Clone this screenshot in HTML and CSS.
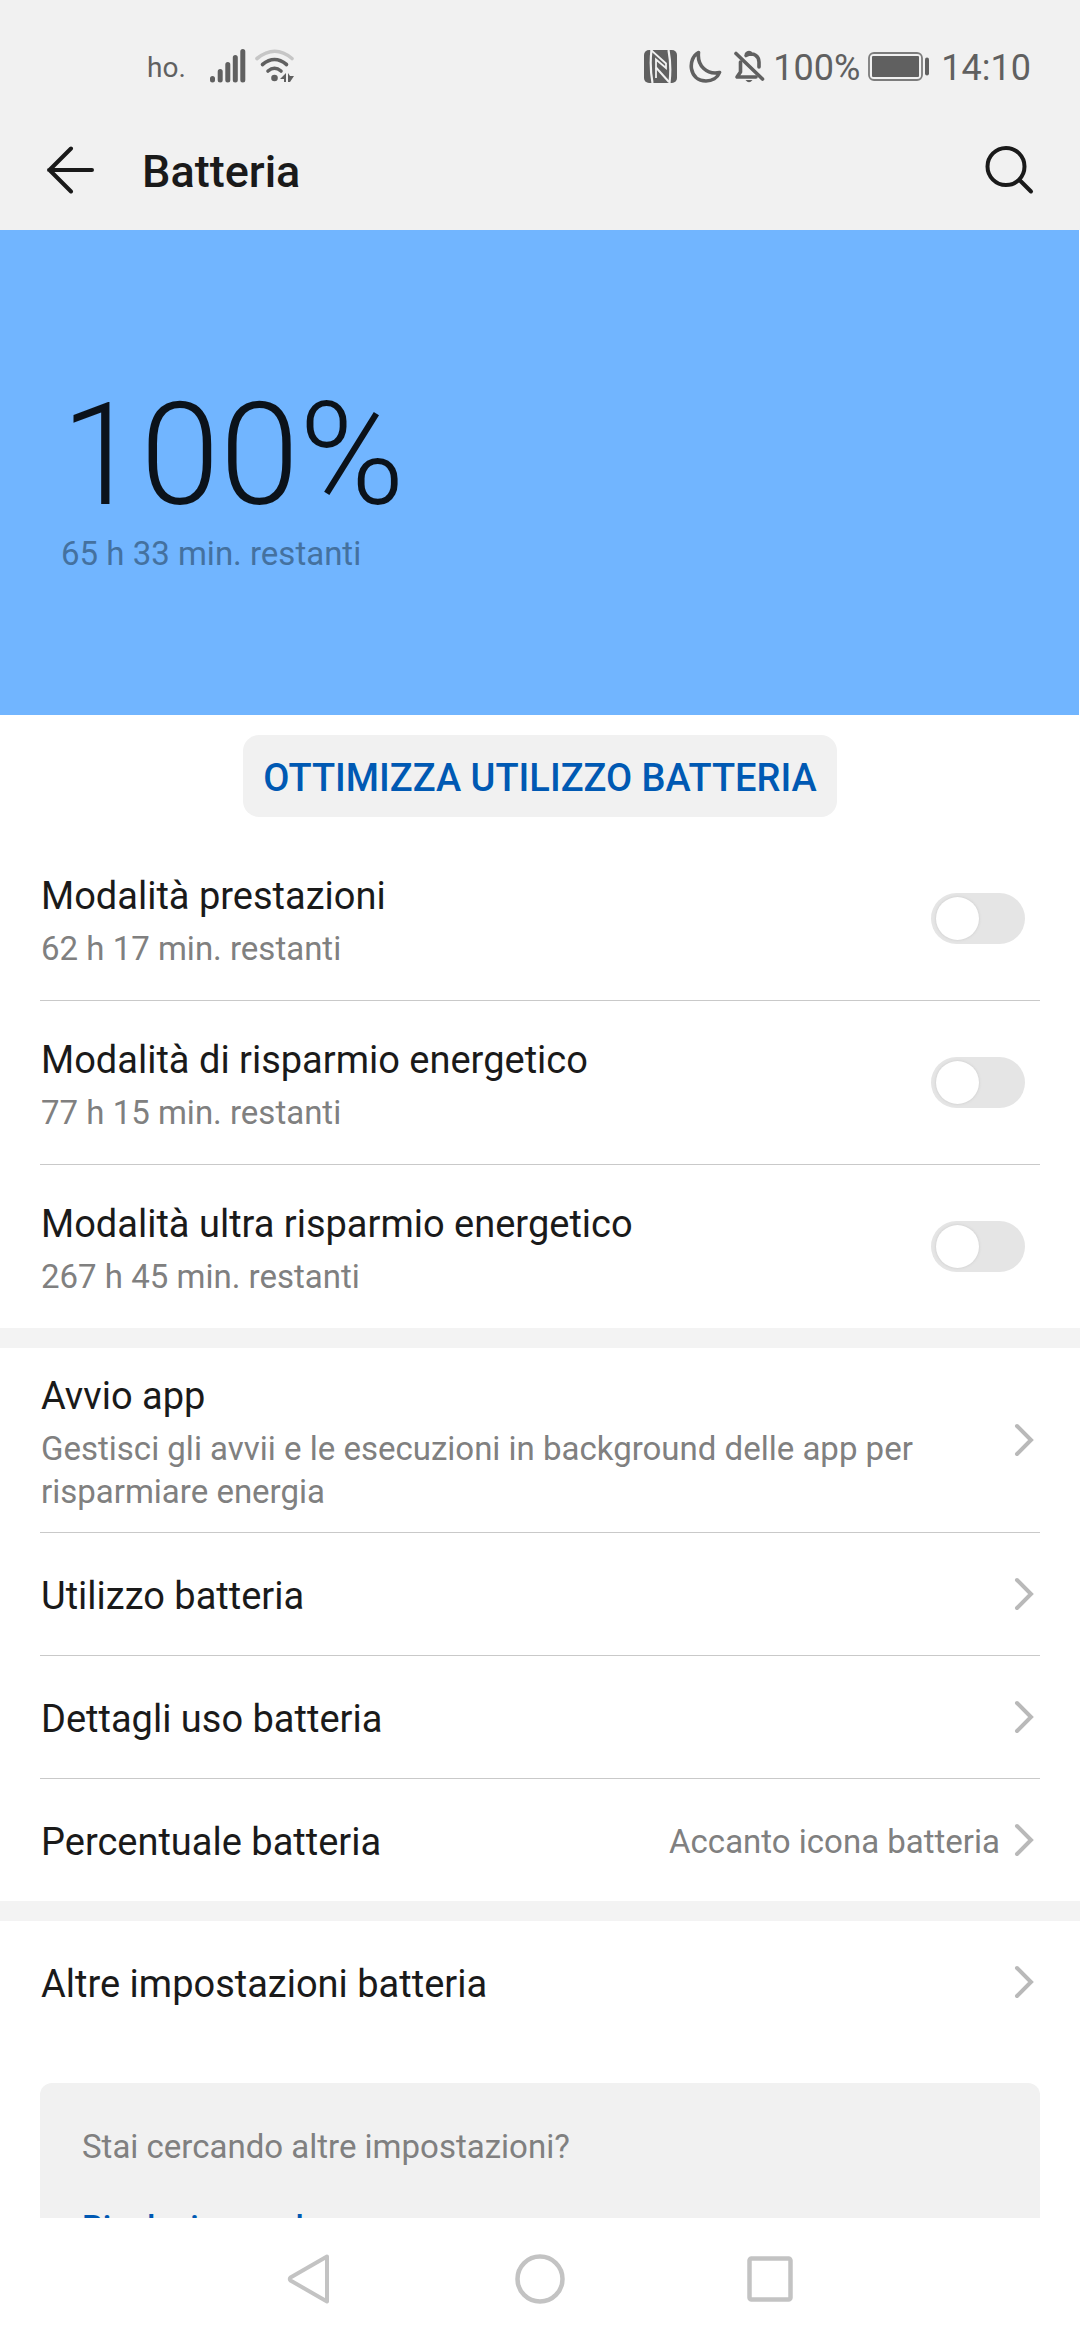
FILE: index.html
```html
<!DOCTYPE html>
<html lang="it">
<head>
<meta charset="utf-8">
<meta name="viewport" content="width=device-width, initial-scale=1">
<title>Batteria</title>
<link rel="stylesheet" href="styles.css">
</head>
<body>
<svg class="sprite" aria-hidden="true">
  <symbol id="chevron" viewBox="0 0 22 34"><path d="M3 3l14 14L3 31" fill="none" stroke="#b9b9b9" stroke-width="4" stroke-linecap="round" stroke-linejoin="miter"/></symbol>
</svg>
<header class="top">
  <div class="status">
    <div class="status-left">
      <span class="carrier">ho.</span>
      <svg class="signal" width="36" height="34" viewBox="0 0 36 34" stroke="#606060" stroke-width="5" stroke-linecap="round"><path d="M2.500 29.500v1.500M10.200 22.500v8.500M17.800 15.500v15.500M25.300 8.500v22.500M32.800 2.500v28.500"/></svg>
      <svg width="40" height="34" viewBox="0 0 40 34" fill="none" stroke="#606060" stroke-linecap="round" stroke-width="3.600"><path stroke="#c6c6c6" d="M2 9.500Q20-5 37 9.500"/><path d="M7.500 15.500q12-10 24 0M13 22q6.500-5.500 13 0"/><circle cx="19.500" cy="29" r="3.300" fill="#606060" stroke="none"/><path d="M31 24v9h-2v-3h-4zM33 24v9h2l4-6h-4z" fill="#606060" stroke="none"/></svg>
    </div>
    <div class="status-right">
      <svg width="33" height="33" viewBox="0 0 33 33"><rect width="33" height="33" rx="5" fill="#606060"/><path d="M7.500 0q-2 16 1 33M24.500 0q3 16 1 33" fill="none" stroke="#f1f1f1" stroke-width="2.200"/><path d="M7 0L22 13.500V18L12 9.500V28" fill="none" stroke="#f1f1f1" stroke-width="1.800"/><path d="M12 17.500L25 32" stroke="#f1f1f1" stroke-width="2"/></svg>
      <svg width="33" height="33" viewBox="0 0 33 33"><path d="M9.500 2.500C-2 9 0 31 17 31c6 0 11.500-3 13.500-8.500C18 25 8 16 9.500 2.500z" fill="none" stroke="#606060" stroke-width="3.600" stroke-linejoin="round"/></svg>
      <svg width="31" height="33" viewBox="0 0 31 33" fill="none" stroke="#606060" stroke-width="3.600" stroke-linecap="round" stroke-linejoin="round"><path d="M2 3.500L28.500 29"/><path d="M6.500 12v10L3 27h19M12 5.500c8-4 13 1 13 6.500v5M12.500 4q2.500-3 5 0"/><path d="M11.500 30h7q-3.500 4.500-7 0z" fill="#606060" stroke="none"/></svg>
      <span class="percent">100%</span>
      <svg class="cell" width="61" height="29" viewBox="0 0 61 29"><rect x="1" y="1" width="53" height="27" rx="5" fill="none" stroke="#7c7c7c" stroke-width="1.800"/><rect x="4" y="4" width="47" height="21" rx="1" fill="#606060"/><rect x="57" y="5.500" width="4" height="18" rx="2" fill="#606060"/></svg>
      <time>14:10</time>
    </div>
  </div>
  <div class="appbar">
    <button class="icon-button" type="button" aria-label="Indietro"><svg width="48" height="48" viewBox="0 0 48 48"><path d="M46 24H3M25 2.500L3.500 24 25 45.500" fill="none" stroke="#1a1a1a" stroke-width="4" stroke-linecap="round" stroke-linejoin="round"/></svg></button>
    <h1>Batteria</h1>
    <button class="icon-button" type="button" aria-label="Cerca"><svg width="50" height="50" viewBox="0 0 50 50"><g fill="none" stroke="#1a1a1a" stroke-width="4" stroke-linecap="round"><circle cx="22" cy="21.500" r="18.500"/><path d="M35.500 35L47 46.500"/></g></svg></button>
  </div>
</header>
<main>
  <section class="hero">
    <p class="level">100%</p>
    <p class="remaining">65 h 33 min. restanti</p>
  </section>
  <button class="optimize" type="button">OTTIMIZZA UTILIZZO BATTERIA</button>
  <section class="group">
    <label class="row mode">
      <span class="text"><span class="name">Modalità prestazioni</span><span class="note">62 h 17 min. restanti</span></span>
      <input type="checkbox" role="switch">
    </label>
    <label class="row mode">
      <span class="text"><span class="name">Modalità di risparmio energetico</span><span class="note">77 h 15 min. restanti</span></span>
      <input type="checkbox" role="switch">
    </label>
    <label class="row mode">
      <span class="text"><span class="name">Modalità ultra risparmio energetico</span><span class="note">267 h 45 min. restanti</span></span>
      <input type="checkbox" role="switch">
    </label>
  </section>
  <section class="group">
    <a class="row launch" href="#avvio">
      <span class="text"><span class="name">Avvio app</span><span class="note">Gestisci gli avvii e le esecuzioni in background delle app per risparmiare energia</span></span>
      <svg class="chevron"><use href="#chevron"/></svg>
    </a>
    <a class="row link" href="#utilizzo"><span class="name">Utilizzo batteria</span><svg class="chevron"><use href="#chevron"/></svg></a>
    <a class="row link" href="#dettagli"><span class="name">Dettagli uso batteria</span><svg class="chevron"><use href="#chevron"/></svg></a>
    <a class="row link" href="#percentuale"><span class="name">Percentuale batteria</span><span class="value">Accanto icona batteria</span><svg class="chevron"><use href="#chevron"/></svg></a>
  </section>
  <section class="group">
    <a class="row link" href="#altre"><span class="name">Altre impostazioni batteria</span><svg class="chevron"><use href="#chevron"/></svg></a>
  </section>
  <aside class="related">
    <p>Stai cercando altre impostazioni?</p>
    <a href="#risoluzione">Risoluzione schermo</a>
  </aside>
</main>
<nav class="system-nav">
  <button type="button" aria-label="Indietro"><svg width="50" height="50" viewBox="0 0 50 50"><path d="M42 2.500L5.500 23.500q-1.500 1.500 0 3L42 47.500Z" fill="none" stroke="#c3c3c3" stroke-width="4" stroke-linejoin="round"/></svg></button>
  <button type="button" aria-label="Home"><svg width="50" height="50" viewBox="0 0 50 50"><circle cx="25" cy="25" r="22.500" fill="none" stroke="#c3c3c3" stroke-width="4.500"/></svg></button>
  <button type="button" aria-label="Recenti"><svg width="50" height="50" viewBox="0 0 50 50"><rect x="4.500" y="4.500" width="41" height="41" rx="2" fill="none" stroke="#c3c3c3" stroke-width="4.500"/></svg></button>
</nav>
</body>
</html>
```
FILE: styles.css
```css
* { box-sizing: border-box; }

body {
  margin: 0;
  height: 100vh;
  display: flex;
  flex-direction: column;
  background: #fff;
  color: #1a1a1a;
  font-family: Roboto, sans-serif;
}

h1, p { margin: 0; }
a { color: inherit; text-decoration: none; }
button { border: 0; padding: 0; background: none; font: inherit; color: inherit; }
svg { display: block; flex: none; }
.sprite { position: absolute; width: 0; height: 0; }

.top { flex: none; background: #f1f1f1; }

.status {
  height: 110px;
  padding: 22px 49px 0 147px;
  display: flex;
  align-items: center;
  justify-content: space-between;
  color: #606060;
  font-size: 36px;
}
.status-left, .status-right { display: flex; align-items: center; }
.status-left { gap: 9px; }
.carrier { font-size: 28px; margin-right: 15px; line-height: 44px; }
.status-right { gap: 12px; }
.carrier, .percent, time { padding-top: 3px; }
.percent { margin: 0 -4px; }

.appbar {
  height: 120px;
  padding: 0 46px;
  display: flex;
  align-items: center;
}
.appbar h1 {
  flex: 1;
  margin-left: 48px;
  padding-top: 2px;
  font-size: 45px;
  font-weight: 500;
}

main { flex: 1 1 0; min-height: 0; overflow: hidden; }

.hero {
  height: 485px;
  margin-right: 1px;
  padding: 147px 61px 0;
  background: #71b5ff;
}
.level { font-size: 143px; font-weight: 300; line-height: 156px; color: #0b121a; }
.remaining { padding-top: 0; font-size: 33px; line-height: 41px; color: #44719f; }

.optimize {
  display: block;
  height: 82px;
  margin: 20px auto;
  padding: 4px 20px 0;
  border-radius: 16px;
  background: #f1f1f1;
  color: #0059b3;
  font-size: 38px;
  font-weight: 500;
}

.group + .group { border-top: 20px solid #f3f3f3; }
.row {
  margin: 0 40px;
  display: flex;
  align-items: center;
}
.row + .row { border-top: 1px solid #c9c9c9; }
.row.mode { padding-right: 15px; }
.mode .text { padding: 37px 0 30px 1px; }
.launch .text { padding: 26px 80px 19px 1px; }
.link .name { padding: 41px 0 37px 1px; }
.link .value { padding-top: 3px; }
.text { flex: 1; display: flex; flex-direction: column; gap: 9px; }
.name { flex: 1; font-size: 38px; line-height: 44px; }
.note, .value { font-size: 33px; line-height: 43px; color: #808080; }
.chevron { width: 22px; height: 34px; margin: 0 4px 0 14px; }

.row input {
  appearance: none;
  flex: none;
  width: 94px;
  height: 51px;
  margin: 0;
  padding: 4px 5px;
  border-radius: 26px;
  background: #e5e5e5;
}
.row input::before {
  content: "";
  display: block;
  width: 43px;
  height: 43px;
  border-radius: 50%;
  background: #fff;
  box-shadow: 0 0 3px #c8c8c8;
}
.row input:checked { background: #0a7cff; }
.row input:checked::before { margin-left: auto; }

.related {
  margin: 40px 40px 0;
  padding: 42px;
  border-radius: 12px;
  background: #f1f1f1;
  font-size: 33px;
  line-height: 43px;
  color: #808080;
}
.related a {
  display: block;
  margin-top: 38px;
  color: #0059b3;
  font-weight: 500;
}

.system-nav {
  flex: none;
  height: 122px;
  display: flex;
  justify-content: center;
  background: #fff;
}
.system-nav button {
  width: 230px;
  display: flex;
  align-items: center;
  justify-content: center;
}
```
